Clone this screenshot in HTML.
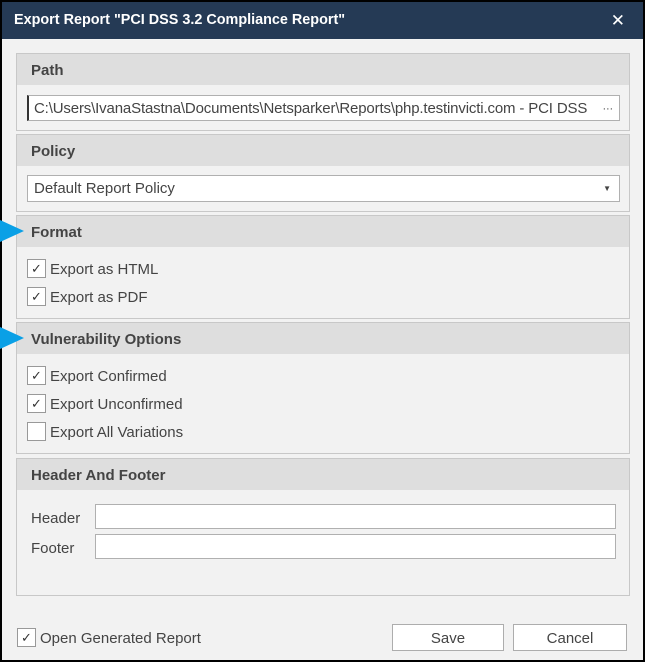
<!DOCTYPE html>
<html><head><style>
*{margin:0;padding:0;box-sizing:border-box}
body{width:645px;height:662px;background:#000;font-family:"Liberation Sans",sans-serif;color:#444;position:relative;overflow:hidden}
.win{position:absolute;left:2px;top:2px;width:641px;height:658px;background:#f2f2f2}
.title{position:absolute;left:0;top:0;width:641px;height:37px;background:#253a55;color:#fff;font-weight:bold;font-size:14.4px;line-height:37px;padding-left:12px}
.x{position:absolute;right:18px;top:0;font-size:17px;font-weight:normal}
.a{position:absolute}
.sec{position:absolute;left:14px;width:614px;border:1px solid #c8c8c8;background:#f2f2f2}
.hd{height:31px;background:#dedede;font-weight:bold;font-size:15px;line-height:33px;padding-left:14px;color:#444}
.in{position:absolute;background:#fff;border:1px solid #b0b0b0;font-size:15px;line-height:26px;padding-left:6px;color:#444;white-space:nowrap;overflow:hidden}
.cb{position:absolute;left:10px;font-size:15px;line-height:21px;color:#444}
.cb i{display:inline-block;width:19px;height:19px;border:1px solid #999;background:#fff;vertical-align:top;margin-right:4px;font-style:normal;text-align:center;font-size:13px;line-height:17px;color:#333}
.tri{position:absolute;left:0;width:0;height:0;border-top:11px solid transparent;border-bottom:11px solid transparent;border-left:24px solid #0aa0e6}
.btn{position:absolute;top:622px;height:27px;background:#fff;border:1px solid #adadad;font-size:15px;line-height:28px;text-align:center;color:#444}
</style></head><body>
<div class="win">
<div class="title">Export Report "PCI DSS 3.2 Compliance Report"<span class="x">✕</span></div>
<div class="sec" style="top:51px;height:78px"><div class="hd">Path</div>
<div class="in" style="left:10px;top:41px;width:593px;height:26px;padding-left:5px;border-left:2px solid #333;letter-spacing:-0.15px">C:\Users\IvanaStastna\Documents\Netsparker\Reports\php.testinvicti.com - PCI DSS<span style="position:absolute;right:6px;font-size:11px">···</span></div></div>
<div class="sec" style="top:132px;height:78px"><div class="hd">Policy</div>
<div class="in" style="left:10px;top:40px;width:593px;height:27px">Default Report Policy<span style="position:absolute;right:8px;top:0;font-size:8px">▼</span></div></div>
<div class="sec" style="top:213px;height:104px"><div class="hd">Format</div>
<div class="cb" style="top:43px"><i>✓</i>Export as HTML</div>
<div class="cb" style="top:71px"><i>✓</i>Export as PDF</div></div>
<div class="sec" style="top:320px;height:132px"><div class="hd">Vulnerability Options</div>
<div class="cb" style="top:43px"><i>✓</i>Export Confirmed</div>
<div class="cb" style="top:71px"><i>✓</i>Export Unconfirmed</div>
<div class="cb" style="top:99px"><i></i>Export All Variations</div></div>
<div class="sec" style="top:456px;height:138px"><div class="hd">Header And Footer</div>
<div class="a" style="left:14px;top:51px;font-size:15px">Header</div>
<div class="in" style="left:78px;top:45px;width:521px;height:25px"></div>
<div class="a" style="left:14px;top:81px;font-size:15px">Footer</div>
<div class="in" style="left:78px;top:75px;width:521px;height:25px"></div></div>
<div class="cb" style="left:15px;top:626px"><i>✓</i>Open Generated Report</div>
<div class="btn" style="left:390px;width:112px">Save</div>
<div class="btn" style="left:511px;width:114px">Cancel</div>
</div>
<div class="tri" style="top:220px"></div>
<div class="tri" style="top:327px"></div>
</body></html>
